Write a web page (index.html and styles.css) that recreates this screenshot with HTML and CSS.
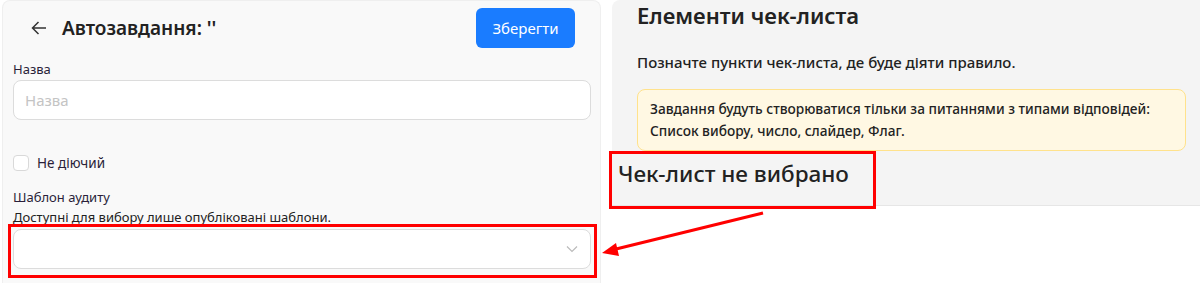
FILE: index.html
```html
<!DOCTYPE html>
<html lang="uk">
<head>
  <meta charset="UTF-8">
  <title>Автозавдання</title>
  <link rel="stylesheet" href="styles.css">
</head>
<body>

  <div class="page">
    <div class="form-panel">
      <div class="form-head">
        <div class="head-title">
          <svg class="back" width="16" height="16" viewBox="0 0 16 16">
            <path d="M15 8H1.5M7.5 2L1.5 8l6 6" fill="none" stroke="#333" stroke-width="1.5"/>
          </svg>
          <h1>Автозавдання: ''</h1>
        </div>
        <button class="save">Зберегти</button>
      </div>

      <label class="label">Назва</label>
      <input class="field" type="text" placeholder="Назва">

      <label class="check"><span class="box"></span>Не діючий</label>

      <div class="label big">Шаблон аудиту</div>
      <div class="hint">Доступні для вибору лише опубліковані шаблони.</div>
      <div class="field select">
        <svg width="12" height="8" viewBox="0 0 12 8">
          <path d="M1 1.5l5 5 5-5" fill="none" stroke="#bbb" stroke-width="1.2"/>
        </svg>
      </div>
    </div>

    <div class="items-panel">
      <h2>Елементи чек-листа</h2>
      <p>Позначте пункти чек-листа, де буде діяти правило.</p>
      <div class="alert">
        Завдання будуть створюватися тільки за питаннями з типами відповідей:<br>
        Список вибору, число, слайдер, Флаг.
      </div>
      <div class="empty">Чек-лист не вибрано</div>
    </div>
  </div>

  <!-- annotation overlay -->
  <div class="mark mark-select"></div>
  <div class="mark mark-empty"></div>
  <svg class="arrow" width="1200" height="283" viewBox="0 0 1200 283">
    <path d="M763 213L612 250" stroke="#f00" stroke-width="3"/>
    <path d="M602 253L616 243L619 256Z" fill="#f00"/>
  </svg>

</body>
</html>
```

FILE: styles.css
```css
body {
  margin: 0;
  background: #fff;
  font-family: "Noto Sans", "Open Sans", sans-serif;
  color: #222;
  overflow: hidden;
}
.page {
  display: flex;
  gap: 11px;
  padding-left: 2px;
  height: 283px;
  align-items: flex-start;
}
.form-panel {
  width: 599px;
  height: 283px;
  box-sizing: border-box;
  background: #f9f9f9;
  border: 1px solid #efefef;
  border-bottom: none;
  border-radius: 8px 8px 0 0;
  padding: 7px 9px 0 10px;
}
.form-head {
  display: flex;
  justify-content: space-between;
  align-items: center;
  height: 40px;
}
.head-title {
  display: flex;
  align-items: center;
  padding-left: 18px;
}
.back {
  margin-right: 15px;
}
h1 {
  margin: 0;
  font-size: 19px;
  font-weight: 600;
  color: #222;
}
.save {
  margin-right: 16px;
  width: 99px;
  height: 40px;
  border: none;
  border-radius: 6px;
  background: #1a7cff;
  color: #fff;
  font: 15px "Noto Sans", sans-serif;
}
.label {
  display: block;
  margin-top: 12px;
  font-size: 13px;
  line-height: 18px;
  color: #2a1f3a;
}
.field {
  display: block;
  margin-top: 2px;
  width: 578px;
  height: 40px;
  box-sizing: border-box;
  border: 1px solid #dcdcdc;
  border-radius: 8px;
  background: #fff;
  padding: 0 11px;
  font: 15px "Noto Sans", sans-serif;
}
.field::placeholder {
  color: #c4c4c4;
}
.check {
  display: flex;
  align-items: center;
  margin-top: 34px;
  font-size: 13.5px;
  color: #2a1f3a;
}
.box {
  width: 16px;
  height: 16px;
  box-sizing: border-box;
  border: 1px solid #d9d9d9;
  border-radius: 4px;
  background: #fff;
  margin-right: 8px;
}
.label.big {
  margin-top: 16px;
  font-size: 13px;
}
.hint {
  font-size: 13px;
  line-height: 22px;
  color: #222;
}
.select {
  margin-top: 1px;
  display: flex;
  align-items: center;
  justify-content: flex-end;
  padding-right: 12px;
}
.items-panel {
  flex: 1;
  height: 206px;
  box-sizing: border-box;
  background: #f4f4f4;
  border-bottom: 1px solid #e6e6e6;
  border-radius: 8px 0 0 0;
  padding: 1px 14px 0 25px;
}
h2 {
  margin: 0;
  font-size: 22px;
  font-weight: 600;
  line-height: 28px;
  color: #222;
}
.items-panel p {
  margin: 23px 0 0;
  font-size: 15px;
  font-weight: 500;
  line-height: 20px;
}
.alert {
  margin-top: 17px;
  background: #fff8e3;
  border: 1px solid #ffe28c;
  border-radius: 8px;
  padding: 8px 12px 8px 12px;
  font-size: 13.7px;
  font-weight: 500;
  line-height: 22px;
}
.empty {
  margin: 9px 0 0 -19px;
  font-size: 22.5px;
  font-weight: 500;
  line-height: 28px;
}
.mark {
  position: absolute;
  border: 3px solid #f00;
  box-sizing: border-box;
}
.mark-select {
  left: 8px;
  top: 224px;
  width: 589px;
  height: 54px;
}
.mark-empty {
  left: 609px;
  top: 151px;
  width: 267px;
  height: 58px;
}
.arrow {
  position: absolute;
  left: 0;
  top: 0;
}
```
